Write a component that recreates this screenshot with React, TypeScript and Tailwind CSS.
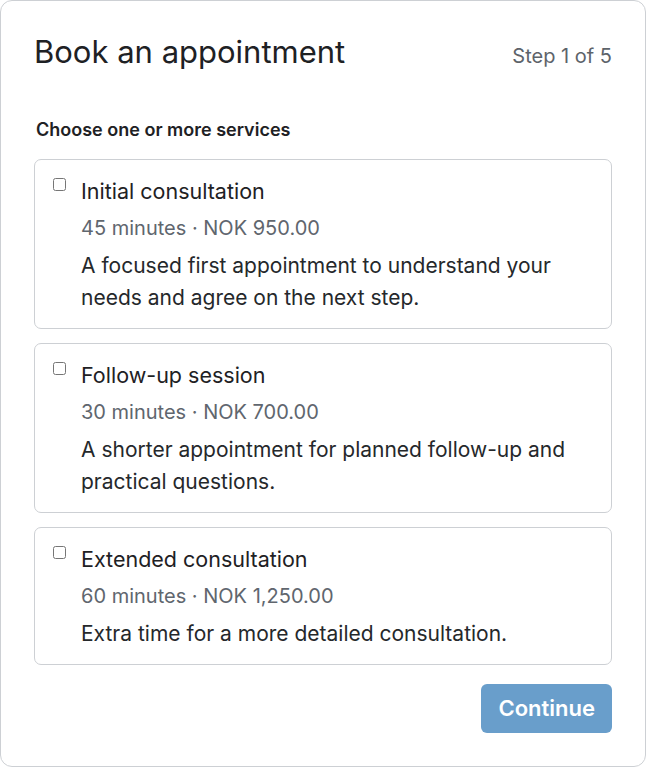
import React from "react";

const services = [
  {
    title: "Initial consultation",
    meta: "45 minutes · NOK 950.00",
    desc: "A focused first appointment to understand your needs and agree on the next step.",
  },
  {
    title: "Follow-up session",
    meta: "30 minutes · NOK 700.00",
    desc: "A shorter appointment for planned follow-up and practical questions.",
  },
  {
    title: "Extended consultation",
    meta: "60 minutes · NOK 1,250.00",
    desc: "Extra time for a more detailed consultation.",
  },
];

export default function App() {
  return (
    <div
      className="w-[646px] h-[767px] bg-white"
      style={{ fontFamily: "Inter, 'Noto Sans', sans-serif" }}
    >
      <div className="h-[767px] border border-[#cdd0d4] rounded-[12px] px-[33px] pt-[32px] pb-[33px] flex flex-col">
        <div className="flex items-baseline justify-between">
          <h1 className="text-[31px] leading-[38px] text-[#1e2124] font-normal">
            Book an appointment
          </h1>
          <span className="text-[20px] text-[#5d636a]">Step 1 of 5</span>
        </div>
        <div className="mt-[47px] mb-[17px] pl-[2px] text-[18px] leading-[24px] font-semibold text-[#1e2124]">
          Choose one or more services
        </div>
        <div className="flex flex-col gap-[14px]">
          {services.map((s) => (
            <label
              key={s.title}
              className="flex items-start border border-[#cdd0d4] rounded-[7px] pl-[14px] pr-[16px] pt-[16px] pb-[14px]"
            >
              <input type="checkbox" className="mt-[2px] ml-[4px] mr-[3px] w-[13px] h-[13px]" />
              <div className="ml-[12px] flex flex-col">
                <div className="text-[21.5px] leading-[30px] text-[#1e2124]">{s.title}</div>
                <div className="mt-[7px] text-[20px] leading-[30px] text-[#60666e]">{s.meta}</div>
                <div className="mt-[7px] text-[21px] leading-[32px] text-[#25282b]">{s.desc}</div>
              </div>
            </label>
          ))}
        </div>
        <div className="flex justify-end mt-[19px]">
          <button className="h-[49px] px-[17px] rounded-[6px] bg-[#699ecb] text-white text-[22px] font-semibold">
            Continue
          </button>
        </div>
      </div>
    </div>
  );
}
